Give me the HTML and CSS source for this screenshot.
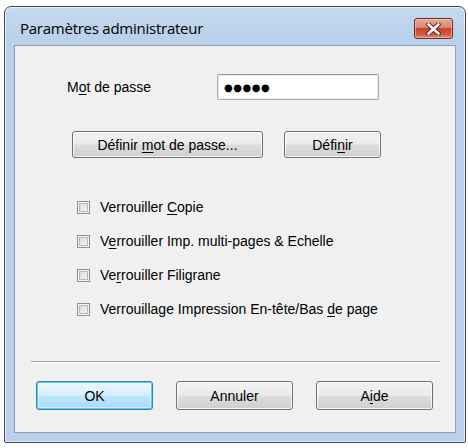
FILE: index.html
```html
<!DOCTYPE html>
<html lang="fr">
<head>
<meta charset="utf-8">
<title>Paramètres administrateur</title>
<link rel="stylesheet" href="styles.css">
</head>
<body>
<div class="window">
  <div class="titlebar">
    <span class="title">Paramètres administrateur</span>
    <span class="close"><svg width="15" height="12" viewBox="0 0 15 12"><path d="M2.5 1.5 L12.5 10.5 M12.5 1.5 L2.5 10.5" stroke="#5a1a10" stroke-width="4.4" stroke-linecap="round"/><path d="M2.5 1.5 L12.5 10.5 M12.5 1.5 L2.5 10.5" stroke="#ffffff" stroke-width="2.6" stroke-linecap="round"/></svg></span>
  </div>
  <div class="client">
    <div class="row pwd-row">
      <span class="label">M<u>o</u>t de passe</span>
      <span class="input"><span class="dots">●●●●●</span></span>
    </div>
    <div class="row btn-row">
      <span class="btn wide"><span>Définir <u>m</u>ot de passe...</span></span>
      <span class="btn small"><span>Défi<u>n</u>ir</span></span>
    </div>
    <div class="checks">
      <div class="check"><span class="box"></span><span>Verrouiller <u>C</u>opie</span></div>
      <div class="check"><span class="box"></span><span>V<u>e</u>rrouiller Imp. multi-pages &amp; Echelle</span></div>
      <div class="check"><span class="box"></span><span>Ve<u>r</u>rouiller Filigrane</span></div>
      <div class="check"><span class="box"></span><span>Verrouillage Impression En-tête/Bas <u>d</u>e page</span></div>
    </div>
    <div class="sep"></div>
    <div class="row bottom">
      <span class="btn dlg default"><span>OK</span></span>
      <span class="btn dlg"><span>Annuler</span></span>
      <span class="btn dlg"><span>A<u>i</u>de</span></span>
    </div>
  </div>
</div>
</body>
</html>
```
FILE: styles.css
```css
html, body { margin: 0; padding: 0; background: #ffffff; }
body { padding: 6px 0 0 4px; font-family: "Liberation Sans", Arial, sans-serif; font-size: 14px; color: #000; }
u { text-decoration: underline; text-underline-offset: 2px; }

.window {
  width: 462px; height: 437px; box-sizing: border-box;
  border: 1px solid #3d4a57; border-radius: 7px 7px 2px 2px;
  background: linear-gradient(#c5d9ee 0px, #b9d1ea 30px, #b9d1ea 100%);
  padding: 0 9px 9px 9px;
  display: flex; flex-direction: column;
  box-shadow: inset 0 0 0 1px rgba(255,255,255,0.6);
}
.titlebar {
  height: 38px; display: flex; align-items: center; justify-content: space-between;
  padding: 0 3px 0 6px;
}
.title { font-family: "Open Sans", "Noto Sans", sans-serif; font-size: 15px; color: #000; margin-top: 4px; letter-spacing: -0.25px; }
.close {
  width: 39px; height: 21px; box-sizing: border-box; margin-top: 5px;
  border: 1px solid #6b2a20; border-radius: 3px;
  background: linear-gradient(#e9a898 0%, #dc8470 45%, #c6452c 50%, #d5563c 80%, #e08a6e 100%);
  display: flex; align-items: center; justify-content: center;
  box-shadow: inset 0 0 0 1px rgba(255,220,210,0.5);
}
.client {
  flex: 1; background: #f0f0f0; border: 1px solid #8e9fb5;
  display: flex; flex-direction: column;
}
.row { display: flex; align-items: center; }
.pwd-row { margin-top: 28px; height: 26px; }
.label { margin-left: 52px; width: 150px; }
.input {
  width: 162px; height: 26px; box-sizing: border-box;
  border: 1px solid #abadb3; border-top-color: #8e98a5; border-radius: 2px;
  background: #fff; padding-left: 6px;
  display: flex; align-items: center; color: #000;
  box-shadow: inset 0 0 0 1px #e3e9ef;
}
.dots { font-family: "DejaVu Sans", sans-serif; font-size: 10px; letter-spacing: 0.5px; }
.btn {
  box-sizing: border-box; display: flex; align-items: center; justify-content: center;
  border: 1px solid #707070; border-radius: 3px;
  background: linear-gradient(#f2f2f2 0%, #ebebeb 48%, #dddddd 52%, #cfcfcf 100%);
  box-shadow: inset 0 0 0 1px rgba(255,255,255,0.8);
}
.btn-row { margin-top: 31px; }
.wide { margin-left: 57px; width: 191px; height: 27px; }
.small { margin-left: 21px; width: 97px; height: 27px; }
.checks { margin-top: 39px; margin-left: 62px; display: flex; flex-direction: column; gap: 14px; }
.check { display: flex; align-items: center; height: 20px; gap: 10px; }
.box {
  width: 13px; height: 13px; box-sizing: border-box;
  border: 1px solid #8e8f8f;
  box-shadow: inset 0 0 0 1px #f4f4f4, inset 0 0 0 2px #b5b9be;
  background: linear-gradient(135deg, #d6d6d6, #f8f8f8);
}
.sep { margin: 42px 15px 0 16px; height: 1px; background: #a0a0a0; border-bottom: 1px solid #ffffff; }
.bottom { margin-top: 18px; margin-left: 21px; gap: 23px; }
.dlg { width: 117px; height: 29px; }
.default {
  border-color: #3c7fb1;
  background: linear-gradient(#eaf6fd 0%, #d9f0fc 48%, #bee6fd 52%, #a7d9f5 100%);
  box-shadow: inset 0 0 0 1px #48d1fc, inset 0 0 0 2px rgba(255,255,255,0.5);
}
```
